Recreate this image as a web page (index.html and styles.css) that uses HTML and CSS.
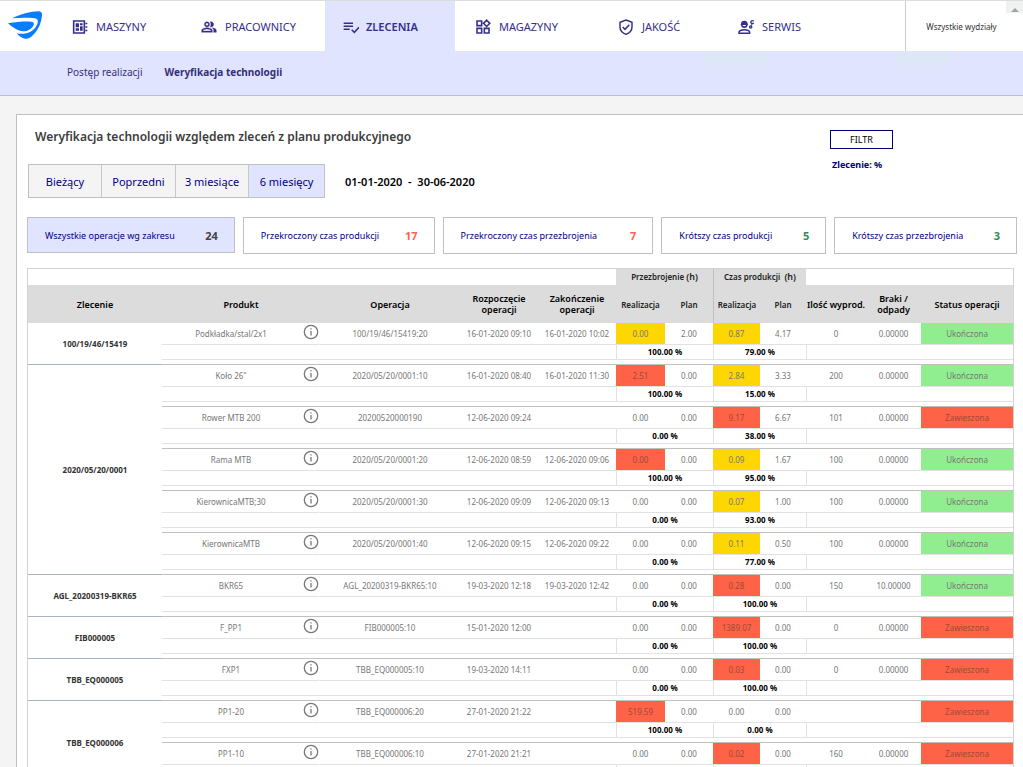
FILE: index.html
```html
<!DOCTYPE html>
<html lang="pl">
<head>
<meta charset="utf-8">
<title>Weryfikacja technologii</title>
<link rel="stylesheet" href="styles.css">
</head>
<body>
<div class="app">
<header class="topbar">
  <a class="logo" href="#" aria-label="Start">
    <svg width="34" height="28" viewBox="0 0 102 84"><path fill="#0a7cff" d="M13 22C36 9 68 2 92 1c7 0 11 4 10 12-2 22-10 44-26 58-8 8-16 13-25 12-10-1-18-8-25-16 28 6 52-6 61-26 6-14 1-20-14-20-18-1-36 0-60 1z"/><path fill="#0a7cff" d="M0 37c24-4 48-6 68-5 9 0 12 5 8 12-6 10-17 17-30 17C30 61 14 49 0 37z"/></svg>
  </a>
  <nav class="mainnav">
    <a href="#" class="tab t1"><svg class="ico" viewBox="0 0 24 24"><path fill="none" stroke="currentColor" stroke-width="2.4" d="M2.500 3h16v18h-16z"/><path fill="currentColor" d="M5.500 6.500h5v6h-5zM12 6.500h4v3h-4zM12 11h4v6.500h-4zM5.500 14h5v3.500h-5zM20 5.500h3v2.400h-3zM20 10.800h3v2.400h-3zM20 16h3v2.400h-3z"/></svg>MASZYNY</a>
    <a href="#" class="tab t2"><svg class="ico" viewBox="0 0 24 24"><path fill="currentColor" stroke="currentColor" stroke-width=".5" d="M16.67 13.13C18.04 14.06 19 15.32 19 17v3h4v-3c0-2.18-3.57-3.47-6.33-3.87zM15 12c2.21 0 4-1.79 4-4s-1.79-4-4-4c-.47 0-.91.1-1.33.24C14.5 5.27 15 6.58 15 8s-.5 2.73-1.33 3.76c.42.14.86.24 1.33.24zM9 12c2.21 0 4-1.79 4-4s-1.79-4-4-4-4 1.79-4 4 1.79 4 4 4zm0-6c1.1 0 2 .9 2 2s-.9 2-2 2-2-.9-2-2 .9-2 2-2zm0 7c-2.67 0-8 1.34-8 4v3h16v-3c0-2.66-5.33-4-8-4zm6 5H3v-.99C3.2 16.29 6.3 15 9 15s5.8 1.29 6 2v1z"/></svg>PRACOWNICY</a>
    <a href="#" class="tab t3 active" aria-current="page"><svg class="ico" viewBox="0 0 24 24"><path fill="none" stroke="currentColor" stroke-width="2.2" d="M1 6.500h14M1 11h14M1 15.500h9M13 16l4 4 7-7.500"/></svg>ZLECENIA</a>
    <a href="#" class="tab t4"><svg class="ico" viewBox="0 0 24 24"><path fill="none" stroke="currentColor" stroke-width="2.4" d="M3 3h7v7H3zM3 14h7v7H3zM14 14h7v7h-7zM17.500 1.800L22.200 6.500 17.500 11.200 12.800 6.500z"/></svg>MAGAZYNY</a>
    <a href="#" class="tab t5"><svg class="ico" viewBox="0 0 24 24"><path fill="none" stroke="currentColor" stroke-width="2.2" d="M12 1.500l9 3.500v7c0 5-4 9-9 11-5-2-9-6-9-11V5zM7 12l3.500 3.500L17 8.500"/></svg>JAKOŚĆ</a>
    <a href="#" class="tab t6"><svg class="ico" viewBox="0 0 24 24"><path fill="none" stroke="currentColor" stroke-width="2.2" d="M1.500 21.500v-2c1-3 4-3.500 8-3.500s7 .5 8 3.500v2z"/><path fill="currentColor" d="M4.500 7c0-3 2-4.500 5-4.500s5 1.500 5 4.500l1 1.500h-1c0 3-2 5-5 5s-5-2-5-5h-1zM7 9c.5 1.500 1.500 2 2.500 2s2-.5 2.500-2z"/><path fill="none" stroke="currentColor" stroke-width="2" d="M23.500 3.200c-2-1.500-4.500-.2-4.200 1.800s3 2.500 4.200.8"/><circle cx="19" cy="12" r="1.700" fill="none" stroke="currentColor" stroke-width="2"/><path stroke="currentColor" stroke-width="1.500" d="M21 7.500l-1 2.500"/></svg>SERWIS</a>
  </nav>
  <button class="dept" type="button">Wszystkie wydziały</button>
  <span class="scroll-up" aria-hidden="true"></span>
</header>
<nav class="subnav">
  <a href="#">Postęp realizacji</a>
  <a href="#" class="current">Weryfikacja technologii</a>
</nav>
<main class="panel">
  <div class="head">
    <div class="head-left">
      <h1>Weryfikacja technologii względem zleceń z planu produkcyjnego</h1>
      <div class="range">
        <div class="periods">
          <button type="button">Bieżący</button><button type="button">Poprzedni</button><button type="button">3 miesiące</button><button type="button" class="on">6 miesięcy</button>
        </div>
        <span class="dates">01-01-2020 &nbsp;-&nbsp; 30-06-2020</span>
      </div>
    </div>
    <div class="head-right">
      <button type="button" class="filter">FILTR</button>
      <p class="order">Zlecenie: %</p>
    </div>
  </div>
  <div class="cards">
    <button type="button" class="card on">Wszystkie operacje wg zakresu<b>24</b></button>
    <button type="button" class="card bad">Przekroczony czas produkcji<b>17</b></button>
    <button type="button" class="card bad">Przekroczony czas przezbrojenia<b>7</b></button>
    <button type="button" class="card good">Krótszy czas produkcji<b>5</b></button>
    <button type="button" class="card good">Krótszy czas przezbrojenia<b>3</b></button>
  </div>
  <svg class="defs" width="0" height="0" aria-hidden="true"><symbol id="info" viewBox="0 0 16 16"><circle cx="8" cy="8" r="6.700" fill="none" stroke="#777" stroke-width="1.300"/><path stroke="#777" stroke-width="1.300" d="M8 7v4.500M8 4.300v1.300"/></symbol></svg>
  <table class="ops">
    <colgroup><col class="c-order"><col class="c-prod"><col class="c-info"><col class="c-op"><col class="c-date"><col class="c-date"><col class="c-r1"><col class="c-p1"><col class="c-r2"><col class="c-p2"><col class="c-qty"><col class="c-bad"><col class="c-status"></colgroup>
    <thead>
      <tr class="groups"><td colspan="6"></td><th colspan="2" scope="colgroup">Przezbrojenie <span>(h)</span></th><th colspan="2" scope="colgroup" class="vl">Czas produkcji &nbsp;<span>(h)</span></th><td colspan="3"></td></tr>
      <tr class="names"><th>Zlecenie</th><th colspan="2">Produkt</th><th>Operacja</th><th>Rozpoczęcie operacji</th><th>Zakończenie operacji</th><th class="sub">Realizacja</th><th class="sub">Plan</th><th class="sub vl">Realizacja</th><th class="sub">Plan</th><th class="nw">Ilość wyprod.</th><th>Braki /<br>odpady</th><th>Status operacji</th></tr>
    </thead>
    <tbody>
      <tr class="m"><th rowspan="3">100/19/46/15419</th><td>Podkładka/stal/2x1</td><td class="i"><svg><use href="#info"/></svg></td><td>100/19/46/15419:20</td><td>16-01-2020 09:10</td><td>16-01-2020 10:02</td><td class="y">0.00</td><td>2.00</td><td class="y">0.87</td><td>4.17</td><td>0</td><td>0.00000</td><td class="g">Ukończona</td></tr>
      <tr class="p"><td colspan="5"></td><td colspan="2">100.00 %</td><td colspan="2">79.00 %</td><td colspan="3"></td></tr>
      <tr class="s"><td colspan="12"></td></tr>
    </tbody>
    <tbody>
      <tr class="m"><th rowspan="15">2020/05/20/0001</th><td>Koło 26"</td><td class="i"><svg><use href="#info"/></svg></td><td>2020/05/20/0001:10</td><td>16-01-2020 08:40</td><td>16-01-2020 11:30</td><td class="r">2.51</td><td>0.00</td><td class="y">2.84</td><td>3.33</td><td>200</td><td>0.00000</td><td class="g">Ukończona</td></tr>
      <tr class="p"><td colspan="5"></td><td colspan="2">100.00 %</td><td colspan="2">15.00 %</td><td colspan="3"></td></tr>
      <tr class="s"><td colspan="12"></td></tr>
      <tr class="m"><td>Rower MTB 200</td><td class="i"><svg><use href="#info"/></svg></td><td>20200520000190</td><td>12-06-2020 09:24</td><td></td><td>0.00</td><td>0.00</td><td class="r">9.17</td><td>6.67</td><td>101</td><td>0.00000</td><td class="r">Zawieszona</td></tr>
      <tr class="p"><td colspan="5"></td><td colspan="2">0.00 %</td><td colspan="2">38.00 %</td><td colspan="3"></td></tr>
      <tr class="s"><td colspan="12"></td></tr>
      <tr class="m"><td>Rama MTB</td><td class="i"><svg><use href="#info"/></svg></td><td>2020/05/20/0001:20</td><td>12-06-2020 08:59</td><td>12-06-2020 09:06</td><td class="r">0.00</td><td>0.00</td><td class="y">0.09</td><td>1.67</td><td>100</td><td>0.00000</td><td class="g">Ukończona</td></tr>
      <tr class="p"><td colspan="5"></td><td colspan="2">100.00 %</td><td colspan="2">95.00 %</td><td colspan="3"></td></tr>
      <tr class="s"><td colspan="12"></td></tr>
      <tr class="m"><td>KierownicaMTB;30</td><td class="i"><svg><use href="#info"/></svg></td><td>2020/05/20/0001:30</td><td>12-06-2020 09:09</td><td>12-06-2020 09:13</td><td>0.00</td><td>0.00</td><td class="y">0.07</td><td>1.00</td><td>100</td><td>0.00000</td><td class="g">Ukończona</td></tr>
      <tr class="p"><td colspan="5"></td><td colspan="2">0.00 %</td><td colspan="2">93.00 %</td><td colspan="3"></td></tr>
      <tr class="s"><td colspan="12"></td></tr>
      <tr class="m"><td>KierownicaMTB</td><td class="i"><svg><use href="#info"/></svg></td><td>2020/05/20/0001:40</td><td>12-06-2020 09:15</td><td>12-06-2020 09:22</td><td>0.00</td><td>0.00</td><td class="y">0.11</td><td>0.50</td><td>100</td><td>0.00000</td><td class="g">Ukończona</td></tr>
      <tr class="p"><td colspan="5"></td><td colspan="2">0.00 %</td><td colspan="2">77.00 %</td><td colspan="3"></td></tr>
      <tr class="s"><td colspan="12"></td></tr>
    </tbody>
    <tbody>
      <tr class="m"><th rowspan="3">AGL_20200319-BKR65</th><td>BKR65</td><td class="i"><svg><use href="#info"/></svg></td><td>AGL_20200319-BKR65:10</td><td>19-03-2020 12:18</td><td>19-03-2020 12:42</td><td>0.00</td><td>0.00</td><td class="r">0.28</td><td>0.00</td><td>150</td><td>10.00000</td><td class="g">Ukończona</td></tr>
      <tr class="p"><td colspan="5"></td><td colspan="2">0.00 %</td><td colspan="2">100.00 %</td><td colspan="3"></td></tr>
      <tr class="s"><td colspan="12"></td></tr>
    </tbody>
    <tbody>
      <tr class="m"><th rowspan="3">FIB000005</th><td>F_PP1</td><td class="i"><svg><use href="#info"/></svg></td><td>FIB000005:10</td><td>15-01-2020 12:00</td><td></td><td>0.00</td><td>0.00</td><td class="r">1389.07</td><td>0.00</td><td>0</td><td>0.00000</td><td class="r">Zawieszona</td></tr>
      <tr class="p"><td colspan="5"></td><td colspan="2">0.00 %</td><td colspan="2">100.00 %</td><td colspan="3"></td></tr>
      <tr class="s"><td colspan="12"></td></tr>
    </tbody>
    <tbody>
      <tr class="m"><th rowspan="3">TBB_EQ000005</th><td>FXP1</td><td class="i"><svg><use href="#info"/></svg></td><td>TBB_EQ000005:10</td><td>19-03-2020 14:11</td><td></td><td>0.00</td><td>0.00</td><td class="r">0.03</td><td>0.00</td><td>0</td><td>0.00000</td><td class="r">Zawieszona</td></tr>
      <tr class="p"><td colspan="5"></td><td colspan="2">0.00 %</td><td colspan="2">100.00 %</td><td colspan="3"></td></tr>
      <tr class="s"><td colspan="12"></td></tr>
    </tbody>
    <tbody>
      <tr class="m"><th rowspan="6">TBB_EQ000006</th><td>PP1-20</td><td class="i"><svg><use href="#info"/></svg></td><td>TBB_EQ000006:20</td><td>27-01-2020 21:22</td><td></td><td class="r">519.59</td><td>0.00</td><td>0.00</td><td>0.00</td><td></td><td></td><td class="r">Zawieszona</td></tr>
      <tr class="p"><td colspan="5"></td><td colspan="2">100.00 %</td><td colspan="2">0.00 %</td><td colspan="3"></td></tr>
      <tr class="s"><td colspan="12"></td></tr>
      <tr class="m"><td>PP1-10</td><td class="i"><svg><use href="#info"/></svg></td><td>TBB_EQ000006:10</td><td>27-01-2020 21:21</td><td></td><td>0.00</td><td>0.00</td><td class="r">0.02</td><td>0.00</td><td>160</td><td>0.00000</td><td class="r">Zawieszona</td></tr>
      <tr class="p"><td colspan="5"></td><td colspan="2"></td><td colspan="2"></td><td colspan="3"></td></tr>
      <tr class="s"><td colspan="12"></td></tr>
    </tbody>
  </table>
</main>
</div>
</body>
</html>
```
FILE: styles.css
```css
* { box-sizing: border-box; }
body {
  margin: 0;
  background: #f4f4f4;
  color: #000;
  font-family: "Noto Sans", "Open Sans", sans-serif;
  font-size: 10px;
}
button { font: inherit; color: inherit; margin: 0; padding: 0; cursor: pointer; }
a { text-decoration: none; color: inherit; }
.app { height: 100vh; overflow: hidden; }

.topbar {
  position: relative;
  display: flex;
  height: 51px;
  background: #fff;
  border-top: 1px solid #ddd;
}
.logo { width: 52px; padding: 10px 0 0 8px; }
.mainnav { display: flex; flex: 1; color: #352f8a; font-size: 11px; }
.tab { display: flex; align-items: center; gap: 8px; padding: 1px 0 0 20px; }
.t1 { width: 129px; }
.t2 { width: 144px; }
.t3 { width: 130px; padding-left: 18px; gap: 7px; }
.t4 { width: 143px; }
.t5 { width: 120px; }
.tab.active { background: #e0e4ff; font-weight: 600; }
.ico { width: 16px; height: 16px; }
.dept {
  width: 118px;
  padding-right: 6px;
  border: 0;
  border-left: 1px solid #ccc;
  background: #fff;
  color: #333;
  font-size: 8px;
}
.scroll-up {
  position: absolute;
  top: 0;
  right: 0;
  width: 17px;
  height: 12px;
  background: #f0f1f1;
}
.scroll-up::after {
  content: "";
  position: absolute;
  left: 5px;
  bottom: 1px;
  border: 4px solid transparent;
  border-top: 0;
  border-bottom-color: #a3a3a3;
}

.subnav {
  display: flex;
  align-items: center;
  gap: 22px;
  height: 45px;
  padding: 0 0 2px 67px;
  border-bottom: 1px solid #c0c0c4;
  background:
    linear-gradient(#dce8f6, #dce8f6) 703px 0 / 65px 14px no-repeat,
    linear-gradient(#dce8f6, #dce8f6) 895px 0 / 54px 14px no-repeat,
    #e0e4ff;
  color: #352f7a;
  font-size: 10px;
}
.current { font-weight: 700; }

.panel {
  margin: 18px 0 0 16px;
  padding: 14px 6px 0 10px;
  background: #fff;
  border: 1px solid #c0c0c0;
  border-right: 0;
}
.head { display: flex; }
.head-left { flex: 1; }
h1 {
  margin: 0 0 19px 8px;
  color: #3c3c3c;
  font-size: 12px;
  line-height: 16px;
  font-weight: 600;
}
.range { display: flex; align-items: center; gap: 20px; margin-left: 1px; }
.periods {
  display: flex;
  height: 34px;
  border: 1px solid #c0c0c0;
  background: #f4f4f4;
  color: #00007d;
  font-size: 11px;
}
.periods button { width: 74px; border: 0; border-right: 1px solid #c8c8c8; background: none; }
.periods button:nth-child(-n+1), .periods button:nth-child(3) { width: 73px; }
.periods button.on { width: 75px; border-right: 0; background: #e0e4ff; }
.dates { font-weight: 600; font-size: 11px; }
.head-right { width: 187px; padding-top: 1px; }
.filter {
  width: 63px;
  height: 19px;
  border: 1px solid #00007d;
  background: #fff;
  font-size: 9px;
}
.order { margin: 9px 2px; line-height: 14px; color: #00007d; font-size: 9px; font-weight: 700; }

.cards {
  display: grid;
  grid-template-columns: 208fr 192fr 211fr 165fr 183fr;
  gap: 8px;
  margin-top: 19px;
}
.card {
  display: flex;
  align-items: center;
  justify-content: space-between;
  height: 37px;
  padding: 0 16px 0 17px;
  border: 1px solid #c0c0c0;
  background: #fff;
  color: #00007d;
  font-size: 9px;
  white-space: nowrap;
}
.card.on { height: 36px; background: #e0e4ff; }
.card b { font-size: 11px; color: #444; }
.card.bad b { color: #ff6347; }
.card.good b { color: #2e8b57; }

.defs { display: block; }
.ops {
  width: calc(100% - 3px);
  margin-top: 14px;
  table-layout: fixed;
  border-collapse: separate;
  border-spacing: 0;
  border: 1px solid #d3d3d3;
  text-align: center;
}
.c-order { width: 134px; }
.c-prod { width: 138px; }
.c-info { width: 20px; }
.c-op { width: 140px; }
.c-date { width: 78px; }
.c-r1 { width: 49px; }
.c-p1 { width: 48px; }
.c-r2 { width: 47px; }
.c-p2 { width: 46px; }
.c-qty { width: 60px; }
.c-bad { width: 55px; }
.c-status { width: 92px; }
.ops th, .ops td { padding: 0; white-space: nowrap; }
.groups { height: 16px; }
.groups th { background: #dcdcdc; color: #222; font-size: 8px; line-height: 14px; font-weight: 600; }
.groups span { font-size: 9px; }
.names { height: 38px; }
.ops .names th { background: #dcdcdc; font-size: 9px; line-height: 11px; font-weight: 600; white-space: normal; }
.ops .names .sub { font-size: 8px; color: #222; font-weight: 600; }
.ops .names .nw { white-space: nowrap; }
.ops .vl { border-left: 1px solid #c0c0c0; }

.ops tbody th {
  border-bottom: 1px solid #a9b4c4;
  color: #333;
  font-size: 8px;
  font-weight: 700;
}
.m { height: 22px; }
.ops .m td { border-bottom: 1px solid #e2e2e2; color: #777; font-size: 8px; line-height: 12px; }
.ops .m .i { border-right: 1px solid #fff; vertical-align: top; }
.i svg { display: block; width: 16px; height: 16px; margin: 1px 0 0 auto; }
.ops .y { background: #ffd700; color: #806c1a; }
.ops .m .r { background: #ff6347; color: #9c4a3a; }
.ops .g { background: #90ee90; color: #567a56; }
.p { height: 15px; }
.ops .p td { border-bottom: 1px solid #e2e2e2; font-size: 8px; line-height: 12px; font-weight: 700; }
.ops .p td + td { border-left: 1px solid #e2e2e2; }
.s { height: 5px; }
.ops .s td { border-bottom: 1px solid #c0c0c0; }
```
